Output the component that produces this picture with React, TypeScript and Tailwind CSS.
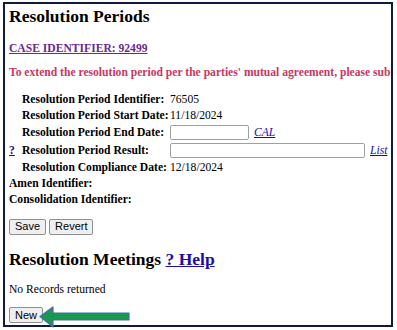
import React from "react";

function Btn({ children }: { children: React.ReactNode }) {
  return (
    <button className="[font-family:Liberation_Sans,Arial,sans-serif] h-[16px] px-[5px] text-[11px] leading-none text-black bg-[#efefef] border border-[#8f8f8f] rounded-[2px]">
      {children}
    </button>
  );
}

function Row({
  help,
  indent = true,
  tall,
  label,
  children,
}: {
  help?: boolean;
  indent?: boolean;
  tall?: boolean;
  label: string;
  children?: React.ReactNode;
}) {
  return (
    <div className={`flex items-center ${tall ? "h-[18px]" : "h-[16px]"}`}>
      <div className={indent || help ? "w-[13px] shrink-0" : "w-0"}>
        {help && <a className="text-[#1a0dab] underline font-bold">?</a>}
      </div>
      <div className={`font-bold ${indent || help ? "w-[148px]" : ""} shrink-0`}>{label}</div>
      <div className="flex items-center">{children}</div>
    </div>
  );
}

export default function App() {
  return (
    <div className="relative w-[397px] h-[330px] bg-white pt-[2px] pl-[3px] overflow-hidden">
      <div className="[font-family:Liberation_Serif,Times_New_Roman,serif] w-[390px] h-[325px] border-2 border-[#0d1b3e] overflow-hidden pl-[4px] text-[11.6px] text-black whitespace-nowrap">
        <h2 className="text-[17.5px] font-bold leading-none mt-[4px]">Resolution Periods</h2>
        <a className="block mt-[17px] font-bold text-[#6a2a8c] underline leading-none">
          CASE IDENTIFIER: 92499
        </a>
        <p className="mt-[13px] font-bold text-[#c8385f] leading-none">
          To extend the resolution period per the parties' mutual agreement, please submit a request.
        </p>
        <div className="mt-[13px] flex flex-col">
          <Row label="Resolution Period Identifier:">76505</Row>
          <Row label="Resolution Period Start Date:">11/18/2024</Row>
          <Row tall label="Resolution Period End Date:">
            <input className="w-[79px] h-[15px] border border-[#a0a0a0] rounded-[2px]" />
            <a className="ml-[5px] italic text-[#1a0dab] underline">CAL</a>
          </Row>
          <Row tall help indent={false} label="Resolution Period Result:">
            <input className="w-[195px] h-[15px] border border-[#a0a0a0] rounded-[2px]" />
            <a className="ml-[5px] italic text-[#1a0dab] underline">List</a>
          </Row>
          <Row label="Resolution Compliance Date:">12/18/2024</Row>
          <Row indent={false} label="Amen Identifier:" />
          <Row indent={false} label="Consolidation Identifier:" />
        </div>
        <div className="mt-[11px] flex gap-[3px]">
          <Btn>Save</Btn>
          <Btn>Revert</Btn>
        </div>
        <h2 className="mt-[16px] text-[17.5px] font-bold leading-none">
          Resolution Meetings <a className="text-[#1a0dab] underline">? Help</a>
        </h2>
        <p className="mt-[15.5px] leading-none">No Records returned</p>
        <div className="mt-[12px] flex items-center">
          <Btn>New</Btn>
        </div>
      </div>
      {/* annotation arrow pointing at New */}
      <svg width="94" height="24" viewBox="0 0 94 24" className="absolute left-[38px] top-[305px]">
        <path
          d="M2 11.5 L15 2 L15 8 L91 8 L91 15 L15 15 L15 22 Z"
          fill="#17994f"
          stroke="#4a6aa8"
          strokeWidth="1.2"
          strokeLinejoin="round"
        />
      </svg>
    </div>
  );
}
